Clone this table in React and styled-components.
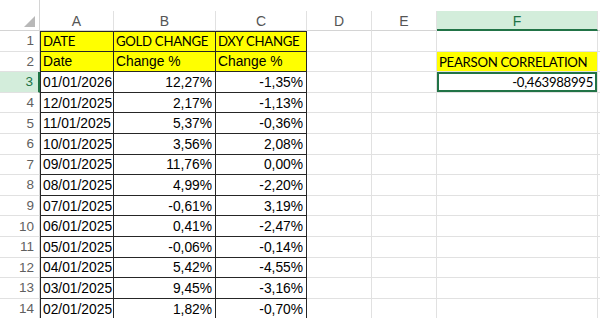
import React from 'react';
import styled, { createGlobalStyle, css } from 'styled-components';

const GlobalStyle = createGlobalStyle`
  html, body {
    margin: 0;
    padding: 0;
    background: #fff;
    overflow: hidden;
  }
`;

const GREEN = '#217346';
const GRID = '#e1e1e1';
const INK = '#262626';
const YELLOW = '#ffff00';

const Sheet = styled.div`
  display: grid;
  grid-template-columns: 40px 74px 102px 91px 65px 65px 161px 1fr;
  grid-template-rows: 11px 20px;
  grid-auto-rows: 20.6px;
  width: 600px;
  height: 318px;
  overflow: hidden;
  background: #fff;
`;

const TopCorner = styled.div`
  box-sizing: border-box;
  border-right: 1px solid #d4d4d4;
`;

const TopStrip = styled.div`
  grid-column: 2 / -1;
`;

const Corner = styled.div`
  box-sizing: border-box;
  display: flex;
  align-items: flex-end;
  justify-content: flex-end;
  padding: 0 4px 3px 0;
  border-right: 1px solid #d4d4d4;
  border-bottom: 1px solid #d4d4d4;
`;

const ColHeader = styled.div`
  box-sizing: border-box;
  display: flex;
  align-items: center;
  justify-content: center;
  padding-top: 1px;
  font-family: "Liberation Sans", Arial, sans-serif;
  font-size: 14px;
  color: #555;
  background: #fff;
  border-right: 1px solid ${GRID};
  border-bottom: 1px solid #d4d4d4;
  ${p => p.$active && css`
    background: #d3eddb;
    color: ${GREEN};
    border-bottom: 2px solid ${GREEN};
  `}
`;

const RowHeader = styled.div`
  box-sizing: border-box;
  display: flex;
  align-items: center;
  justify-content: flex-end;
  padding-right: 5px;
  font-family: "Liberation Sans", Arial, sans-serif;
  font-size: 13.5px;
  color: #5f5f5f;
  border-right: 1px solid #d4d4d4;
  border-bottom: 1px solid ${GRID};
  ${p => p.$active && css`
    background: #d3eddb;
    color: ${GREEN};
    border-right: 2px solid ${GREEN};
  `}
`;

const Cell = styled.div`
  box-sizing: border-box;
  display: flex;
  align-items: flex-end;
  justify-content: ${p => (p.$align === 'right' ? 'flex-end' : 'flex-start')};
  padding: 0 3px 2px 2px;
  background: ${p => p.$fill || '#fff'};
  border-right: 1px solid ${p => (p.$boxed ? INK : GRID)};
  border-bottom: 1px solid ${p => (p.$boxed ? INK : GRID)};
  ${p => p.$first && css`border-left: 1px solid ${INK};`}
  ${p => p.$top && css`border-top: 1px solid ${INK};`}
  font-family: ${p => (p.$label ? 'Lato, "Open Sans", sans-serif' : '"Liberation Sans", Arial, sans-serif')};
  font-size: ${p => (p.$label ? '13.2px' : '13.8px')};
  letter-spacing: ${p => (p.$label ? '-0.3px' : '0')};
  line-height: 1;
  color: #000;
  white-space: nowrap;
  overflow: hidden;
  ${p => p.$active && css`
    box-shadow: inset 0 0 0 2px ${GREEN};
    padding-bottom: 3px;
    padding-right: 4px;
  `}
`;

const SelectAll = () => (
  <svg width="11" height="11" viewBox="0 0 11 11">
    <polygon points="11,0 11,11 0,11" fill="#b8b8b8" />
  </svg>
);

const columns = ['A', 'B', 'C', 'D', 'E', 'F', ''];

const data = [
  ['01/01/2026', '12,27%', '-1,35%'],
  ['12/01/2025', '2,17%', '-1,13%'],
  ['11/01/2025', '5,37%', '-0,36%'],
  ['10/01/2025', '3,56%', '2,08%'],
  ['09/01/2025', '11,76%', '0,00%'],
  ['08/01/2025', '4,99%', '-2,20%'],
  ['07/01/2025', '-0,61%', '3,19%'],
  ['06/01/2025', '0,41%', '-2,47%'],
  ['05/01/2025', '-0,06%', '-0,14%'],
  ['04/01/2025', '5,42%', '-4,55%'],
  ['03/01/2025', '9,45%', '-3,16%'],
  ['02/01/2025', '1,82%', '-0,70%'],
];

const Blank = () => <Cell />;

const App = () => {
  return (
    <>
      <GlobalStyle />
      <Sheet>
        <TopCorner />
        <TopStrip />

        <Corner>
          <SelectAll />
        </Corner>
        {columns.map((c, i) => (
          <ColHeader key={i} $active={c === 'F'}>{c}</ColHeader>
        ))}

        {/* row 1: titles */}
        <RowHeader>1</RowHeader>
        <Cell $boxed $first $top $label $fill={YELLOW}>DATE</Cell>
        <Cell $boxed $top $label $fill={YELLOW}>GOLD CHANGE</Cell>
        <Cell $boxed $top $label $fill={YELLOW}>DXY CHANGE</Cell>
        <Blank />
        <Blank />
        <Blank />
        <Blank />

        {/* row 2: units + correlation label */}
        <RowHeader>2</RowHeader>
        <Cell $boxed $first $fill={YELLOW}>Date</Cell>
        <Cell $boxed $fill={YELLOW}>Change %</Cell>
        <Cell $boxed $fill={YELLOW}>Change %</Cell>
        <Blank />
        <Blank />
        <Cell $label $fill={YELLOW}>PEARSON CORRELATION</Cell>
        <Blank />

        {data.map(([date, gold, dxy], i) => {
          const row = i + 3;
          return (
            <React.Fragment key={row}>
              <RowHeader $active={row === 3}>{row}</RowHeader>
              <Cell $boxed $first>{date}</Cell>
              <Cell $boxed $align="right">{gold}</Cell>
              <Cell $boxed $align="right">{dxy}</Cell>
              <Blank />
              <Blank />
              {row === 3 ? (
                <Cell $label $active $align="right">-0,463988995</Cell>
              ) : (
                <Blank />
              )}
              <Blank />
            </React.Fragment>
          );
        })}
      </Sheet>
    </>
  );
};

export default App;
